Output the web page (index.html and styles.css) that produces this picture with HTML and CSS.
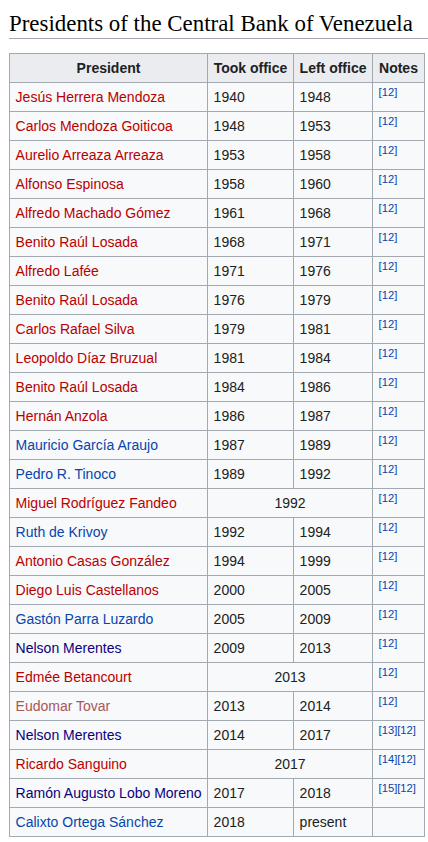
FILE: index.html
```html
<!DOCTYPE html>
<html lang="en">
<head>
<meta charset="utf-8">
<title>Presidents of the Central Bank of Venezuela</title>
<link rel="stylesheet" href="styles.css">
</head>
<body>
<main class="page">
  <h2 class="heading">Presidents of the Central Bank of Venezuela</h2>
  <table class="wikitable">
    <colgroup>
      <col class="c-name"><col class="c-took"><col class="c-left"><col class="c-notes">
    </colgroup>
    <thead>
      <tr><th>President</th><th>Took office</th><th>Left office</th><th>Notes</th></tr>
    </thead>
    <tbody>
      <tr><td><a class="new">Jesús Herrera Mendoza</a></td><td>1940</td><td>1948</td><td><sup class="ref">[12]</sup></td></tr>
      <tr><td><a class="new">Carlos Mendoza Goiticoa</a></td><td>1948</td><td>1953</td><td><sup class="ref">[12]</sup></td></tr>
      <tr><td><a class="new">Aurelio Arreaza Arreaza</a></td><td>1953</td><td>1958</td><td><sup class="ref">[12]</sup></td></tr>
      <tr><td><a class="new">Alfonso Espinosa</a></td><td>1958</td><td>1960</td><td><sup class="ref">[12]</sup></td></tr>
      <tr><td><a class="new">Alfredo Machado Gómez</a></td><td>1961</td><td>1968</td><td><sup class="ref">[12]</sup></td></tr>
      <tr><td><a class="new">Benito Raúl Losada</a></td><td>1968</td><td>1971</td><td><sup class="ref">[12]</sup></td></tr>
      <tr><td><a class="new">Alfredo Lafée</a></td><td>1971</td><td>1976</td><td><sup class="ref">[12]</sup></td></tr>
      <tr><td><a class="new">Benito Raúl Losada</a></td><td>1976</td><td>1979</td><td><sup class="ref">[12]</sup></td></tr>
      <tr><td><a class="new">Carlos Rafael Silva</a></td><td>1979</td><td>1981</td><td><sup class="ref">[12]</sup></td></tr>
      <tr><td><a class="new">Leopoldo Díaz Bruzual</a></td><td>1981</td><td>1984</td><td><sup class="ref">[12]</sup></td></tr>
      <tr><td><a class="new">Benito Raúl Losada</a></td><td>1984</td><td>1986</td><td><sup class="ref">[12]</sup></td></tr>
      <tr><td><a class="new">Hernán Anzola</a></td><td>1986</td><td>1987</td><td><sup class="ref">[12]</sup></td></tr>
      <tr><td><a class="link">Mauricio García Araujo</a></td><td>1987</td><td>1989</td><td><sup class="ref">[12]</sup></td></tr>
      <tr><td><a class="link">Pedro R. Tinoco</a></td><td>1989</td><td>1992</td><td><sup class="ref">[12]</sup></td></tr>
      <tr><td><a class="new">Miguel Rodríguez Fandeo</a></td><td colspan="2" class="center">1992</td><td><sup class="ref">[12]</sup></td></tr>
      <tr><td><a class="link">Ruth de Krivoy</a></td><td>1992</td><td>1994</td><td><sup class="ref">[12]</sup></td></tr>
      <tr><td><a class="new">Antonio Casas González</a></td><td>1994</td><td>1999</td><td><sup class="ref">[12]</sup></td></tr>
      <tr><td><a class="new">Diego Luis Castellanos</a></td><td>2000</td><td>2005</td><td><sup class="ref">[12]</sup></td></tr>
      <tr><td><a class="link">Gastón Parra Luzardo</a></td><td>2005</td><td>2009</td><td><sup class="ref">[12]</sup></td></tr>
      <tr><td><a class="visited">Nelson Merentes</a></td><td>2009</td><td>2013</td><td><sup class="ref">[12]</sup></td></tr>
      <tr><td><a class="new">Edmée Betancourt</a></td><td colspan="2" class="center">2013</td><td><sup class="ref">[12]</sup></td></tr>
      <tr><td><a class="new-visited">Eudomar Tovar</a></td><td>2013</td><td>2014</td><td><sup class="ref">[12]</sup></td></tr>
      <tr><td><a class="visited">Nelson Merentes</a></td><td>2014</td><td>2017</td><td><sup class="ref">[13]</sup><sup class="ref">[12]</sup></td></tr>
      <tr><td><a class="new">Ricardo Sanguino</a></td><td colspan="2" class="center">2017</td><td><sup class="ref">[14]</sup><sup class="ref">[12]</sup></td></tr>
      <tr><td><a class="visited">Ramón Augusto Lobo Moreno</a></td><td>2017</td><td>2018</td><td><sup class="ref">[15]</sup><sup class="ref">[12]</sup></td></tr>
      <tr><td><a class="link">Calixto Ortega Sánchez</a></td><td>2018</td><td>present</td><td></td></tr>
    </tbody>
  </table>
</main>
</body>
</html>
```

FILE: styles.css
```css
html, body {
  margin: 0;
  padding: 0;
  background: #ffffff;
}

body {
  font-family: "Liberation Sans", Arial, sans-serif;
  font-size: 14px;
  color: #202122;
}

.page {
  padding: 0 0 0 9px;
}

.heading {
  font-family: "Liberation Serif", "Times New Roman", serif;
  font-weight: normal;
  font-size: 22.9px;
  line-height: 29px;
  color: #000000;
  white-space: nowrap;
  margin: 0 0 14px 0;
  padding: 9px 0 0 0;
  border-bottom: 1px solid #a2a9b1;
}

.wikitable {
  border-collapse: collapse;
  table-layout: fixed;
  width: 415px;
  background: #f8f9fa;
  color: #202122;
  border: 1px solid #a2a9b1;
  font-size: 14px;
  line-height: 22.4px;
}

.c-name { width: 198px; }
.c-took { width: 86px; }
.c-left { width: 79px; }
.c-notes { width: 52px; }

.wikitable th,
.wikitable td {
  border: 1px solid #a2a9b1;
  padding: 2.8px 5.6px;
  white-space: nowrap;
  vertical-align: middle;
}

.wikitable th {
  background: #eaecf0;
  font-weight: bold;
  text-align: center;
}

.wikitable td {
  text-align: left;
}

.wikitable td.center {
  text-align: center;
}

.new { color: #ba0000; }
.new-visited { color: #a55858; }
.link { color: #0645ad; }
.visited { color: #0b0080; }

.ref {
  color: #0645ad;
  font-size: 11.2px;
  line-height: 1;
  vertical-align: super;
}
```
